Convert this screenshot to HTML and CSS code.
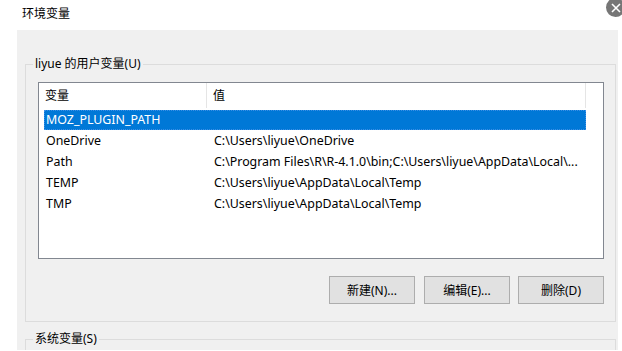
FILE: index.html
```html
<!DOCTYPE html>
<html lang="zh-CN">
<head>
  <meta charset="UTF-8">
  <title>环境变量</title>
  <link rel="stylesheet" href="styles.css">
</head>
<body>
  <div class="title">环境变量</div>
  <button class="close" aria-label="关闭">
    <svg width="10" height="10" viewBox="0 0 10 10"><path d="M1 1L9 9M9 1L1 9" stroke="#fff" stroke-width="1.6"/></svg>
  </button>

  <div class="panel">
    <fieldset class="group">
      <legend>liyue 的用户变量(U)</legend>

      <div class="listview">
        <div class="lv-header">
          <div class="col-name">变量</div>
          <div class="col-value">值</div>
          <div class="col-rest"></div>
        </div>
        <div class="lv-body">
          <div class="row selected"><span class="name">MOZ_PLUGIN_PATH</span><span class="value"></span></div>
          <div class="row"><span class="name">OneDrive</span><span class="value">C:\Users\liyue\OneDrive</span></div>
          <div class="row"><span class="name">Path</span><span class="value">C:\Program Files\R\R-4.1.0\bin;C:\Users\liyue\AppData\Local\...</span></div>
          <div class="row"><span class="name">TEMP</span><span class="value">C:\Users\liyue\AppData\Local\Temp</span></div>
          <div class="row"><span class="name">TMP</span><span class="value">C:\Users\liyue\AppData\Local\Temp</span></div>
        </div>
      </div>

      <div class="buttons">
        <button class="btn">新建(N)...</button>
        <button class="btn">编辑(E)...</button>
        <button class="btn">删除(D)</button>
      </div>
    </fieldset>

    <fieldset class="group">
      <legend>系统变量(S)</legend>
      <div class="listview sys"></div>
    </fieldset>
  </div>
</body>
</html>
```

FILE: styles.css
```css
body {
  margin: 0;
  background: #fff;
  color: #000;
  font-family: "Noto Sans", "Noto Sans CJK SC", sans-serif;
  font-size: 12px;
  height: 351px;
  overflow: hidden;
  position: relative;
}

.title {
  padding: 6px 0 0 22px;
  height: 18px;
  line-height: 16px;
}

.close {
  position: absolute;
  top: -2px;
  left: 606px;
  width: 19px;
  height: 19px;
  border: none;
  border-radius: 50%;
  background: #767676;
  padding: 0;
  display: flex;
  align-items: center;
  justify-content: center;
}

.panel {
  margin: 6px 0 0 17px;
  width: 601px;
  height: 320px;
  overflow: hidden;
  background: #f0f0f0;
  padding-top: 26px;
  box-sizing: border-box;
}

.group {
  margin: 0 0 0 8px;
  width: 591px;
  box-sizing: border-box;
  border: 1px solid #dcdcdc;
  padding: 0 11px 17px 12px;
}

.group legend {
  padding: 0 2px;
  margin-left: -5px;
  line-height: 16px;
}

.group + .group {
  margin-top: 9px;
}

.listview {
  margin-top: 10px;
  height: 177px;
  box-sizing: border-box;
  border: 1px solid #828790;
  background: #fff;
}

.lv-header {
  display: flex;
  height: 25px;
  line-height: 25px;
}

.lv-header div {
  border-right: 1px solid #e5e5e5;
  box-sizing: border-box;
}

.col-name {
  width: 168px;
  padding-left: 6px;
}

.col-value {
  width: 379px;
  padding-left: 6px;
}

.col-rest {
  flex: 1;
  border-right: none !important;
}

.lv-body {
  padding: 2px 0 0 5px;
}

.row {
  display: flex;
  width: 542px;
  height: 21px;
  line-height: 20px;
  font-size: 12.4px;
  white-space: nowrap;
}

.row .name {
  width: 168px;
  padding-left: 2px;
}

.row .value {
  padding-left: 0;
}

.row.selected {
  background: #0078d7;
  color: #fff;
  height: 20px;
  margin-bottom: 1px;
  outline: 1px dotted #3a8ee6;
  outline-offset: -1px;
}

.buttons {
  display: flex;
  justify-content: flex-end;
  gap: 9px;
  margin-top: 17px;
}

.btn {
  width: 86px;
  height: 28px;
  background: #e1e1e1;
  border: 1px solid #adadad;
  font-family: inherit;
  font-size: 12px;
  color: #000;
  padding: 0;
}

.buttons .btn:last-child {
  margin-left: -1px;
}

.listview.sys {
  height: 60px;
}
```
